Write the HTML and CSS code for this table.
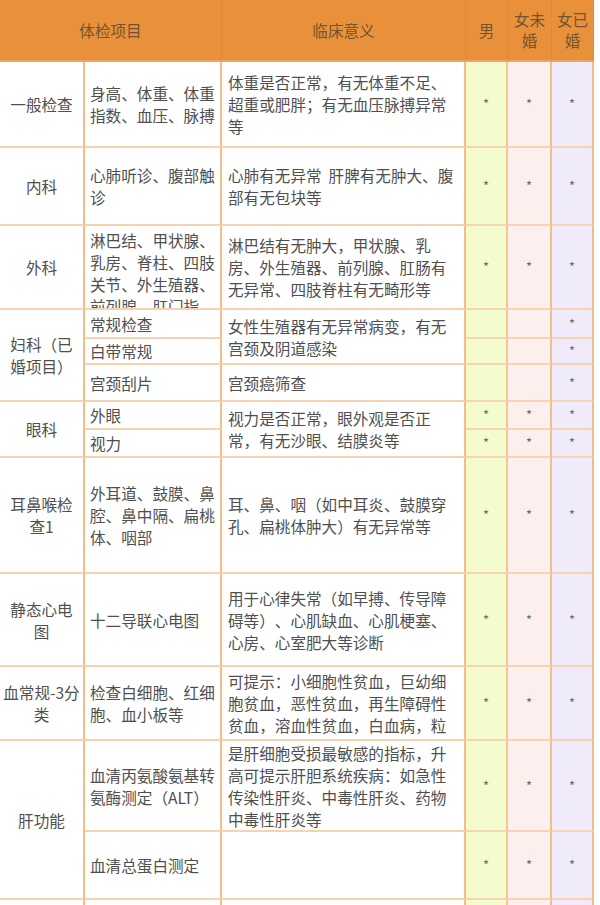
FILE: index.html
```html
<!DOCTYPE html>
<html lang="zh-CN">
<head>
<meta charset="utf-8">
<title>体检项目</title>
<link rel="stylesheet" href="styles.css">
</head>
<body>
<div class="sheet">
  <div class="hd span2"><span>体检项目</span></div>
  <div class="hd"><span>临床意义</span></div>
  <div class="hd"><span>男</span></div>
  <div class="hd"><span>女未婚</span></div>
  <div class="hd"><span>女已婚</span></div>

  <div class="c cat"><span>一般检查</span></div>
  <div class="c item"><span>身高、体重、体重指数、血压、脉搏</span></div>
  <div class="c note"><span>体重是否正常，有无体重不足、超重或肥胖；有无血压脉搏异常等</span></div>
  <div class="c m"><span>*</span></div>
  <div class="c fu"><span>*</span></div>
  <div class="c fm"><span>*</span></div>

  <div class="c cat"><span>内科</span></div>
  <div class="c item"><span>心肺听诊、腹部触诊</span></div>
  <div class="c note"><span>心肺有无异常&nbsp;&nbsp;肝脾有无肿大、腹部有无包块等</span></div>
  <div class="c m"><span>*</span></div>
  <div class="c fu"><span>*</span></div>
  <div class="c fm"><span>*</span></div>

  <div class="c cat"><span>外科</span></div>
  <div class="c item clip"><span>淋巴结、甲状腺、乳房、脊柱、四肢关节、外生殖器、前列腺、肛门指诊。</span></div>
  <div class="c note"><span>淋巴结有无肿大，甲状腺、乳房、外生殖器、前列腺、肛肠有无异常、四肢脊柱有无畸形等</span></div>
  <div class="c m"><span>*</span></div>
  <div class="c fu"><span>*</span></div>
  <div class="c fm"><span>*</span></div>

  <div class="c cat rs3"><span>妇科（已婚项目）</span></div>
  <div class="c item"><span>常规检查</span></div>
  <div class="c note rs2"><span>女性生殖器有无异常病变，有无宫颈及阴道感染</span></div>
  <div class="c m"><span></span></div>
  <div class="c fu"><span></span></div>
  <div class="c fm"><span>*</span></div>
  <div class="c item"><span>白带常规</span></div>
  <div class="c m"><span></span></div>
  <div class="c fu"><span></span></div>
  <div class="c fm"><span>*</span></div>
  <div class="c item"><span>宫颈刮片</span></div>
  <div class="c note"><span>宫颈癌筛查</span></div>
  <div class="c m"><span></span></div>
  <div class="c fu"><span></span></div>
  <div class="c fm"><span>*</span></div>

  <div class="c cat rs2"><span>眼科</span></div>
  <div class="c item"><span>外眼</span></div>
  <div class="c note rs2"><span>视力是否正常，眼外观是否正常，有无沙眼、结膜炎等</span></div>
  <div class="c m"><span>*</span></div>
  <div class="c fu"><span>*</span></div>
  <div class="c fm"><span>*</span></div>
  <div class="c item"><span>视力</span></div>
  <div class="c m"><span>*</span></div>
  <div class="c fu"><span>*</span></div>
  <div class="c fm"><span>*</span></div>

  <div class="c cat"><span>耳鼻喉检查1</span></div>
  <div class="c item"><span>外耳道、鼓膜、鼻腔、鼻中隔、扁桃体、咽部</span></div>
  <div class="c note"><span>耳、鼻、咽（如中耳炎、鼓膜穿孔、扁桃体肿大）有无异常等</span></div>
  <div class="c m"><span>*</span></div>
  <div class="c fu"><span>*</span></div>
  <div class="c fm"><span>*</span></div>

  <div class="c cat"><span>静态心电图</span></div>
  <div class="c item"><span>十二导联心电图</span></div>
  <div class="c note"><span>用于心律失常（如早搏、传导障碍等）、心肌缺血、心肌梗塞、<span class="nw">心房</span>、心室肥大等诊断</span></div>
  <div class="c m"><span>*</span></div>
  <div class="c fu"><span>*</span></div>
  <div class="c fm"><span>*</span></div>

  <div class="c cat"><span>血常规-3分类</span></div>
  <div class="c item"><span>检查白细胞、红细胞、血小板等</span></div>
  <div class="c note clip"><span>可提示：小细胞性贫血，巨幼细胞贫血，恶性贫血，再生障碍性贫血，溶血性贫血，白血病，粒细胞减少症等</span></div>
  <div class="c m"><span>*</span></div>
  <div class="c fu"><span>*</span></div>
  <div class="c fm"><span>*</span></div>

  <div class="c cat rs2"><span>肝功能</span></div>
  <div class="c item"><span>血清丙氨酸氨基转氨酶测定（ALT）</span></div>
  <div class="c note"><span>是肝细胞受损最敏感的指标，升高可提示肝胆系统疾病：如急性传染性肝炎、中毒性肝炎、药物中毒性肝炎等</span></div>
  <div class="c m"><span>*</span></div>
  <div class="c fu"><span>*</span></div>
  <div class="c fm"><span>*</span></div>
  <div class="c item"><span>血清总蛋白测定</span></div>
  <div class="c note"><span></span></div>
  <div class="c m"><span>*</span></div>
  <div class="c fu"><span>*</span></div>
  <div class="c fm"><span>*</span></div>

  <div class="c cat"><span></span></div>
  <div class="c item"><span></span></div>
  <div class="c note"><span></span></div>
  <div class="c m"><span></span></div>
  <div class="c fu"><span></span></div>
  <div class="c fm"><span></span></div>
</div>
</body>
</html>
```

FILE: styles.css
```css
html, body {
  margin: 0;
  padding: 0;
  background: #ffffff;
}

body {
  font-family: "Noto Sans CJK SC", "Noto Sans", sans-serif;
  font-size: 15.6px;
  line-height: 22px;
  color: #4f4f4f;
  text-spacing-trim: space-all;
}

.sheet {
  display: grid;
  width: 594px;
  grid-template-columns: 85px 137px 244px 42px 44px 42px;
  grid-template-rows: 62px 86px 78px 84px 29px 26px 37px 28px 28px 116px 93px 74px 91px 68px 40px;
}

.hd {
  display: flex;
  align-items: center;
  justify-content: center;
  text-align: center;
  background: #e9913a;
  color: #74532f;
  line-height: 21px;
  border-right: 1px solid #e3883a;
  border-bottom: 2px solid #efa664;
  box-sizing: border-box;
  padding: 0 2px;
}

.span2 {
  grid-column: span 2;
}

.c {
  display: flex;
  overflow: hidden;
  box-sizing: border-box;
  border-right: 2px solid #f5bb88;
  border-bottom: 2px solid #f9d3b0;
  background: #ffffff;
}

.c > span {
  margin: auto 0;
  width: 100%;
}

.nw {
  white-space: nowrap;
}

.rs2 {
  grid-row: span 2;
}

.rs3 {
  grid-row: span 3;
}

.cat {
  padding: 0 3px;
  text-align: center;
}

.item {
  padding: 0 5px;
}

.note {
  padding: 0 6px;
}

.item.clip,
.note.clip {
  padding-top: 3px;
}

.m,
.fu,
.fm {
  text-align: center;
  font-size: 13px;
  color: #6a6a6a;
}

.m {
  background: #f4fbcd;
  border-right-color: #f4c791;
}

.fu {
  background: #fbf0ee;
}

.fm {
  background: #efebfb;
}
```
